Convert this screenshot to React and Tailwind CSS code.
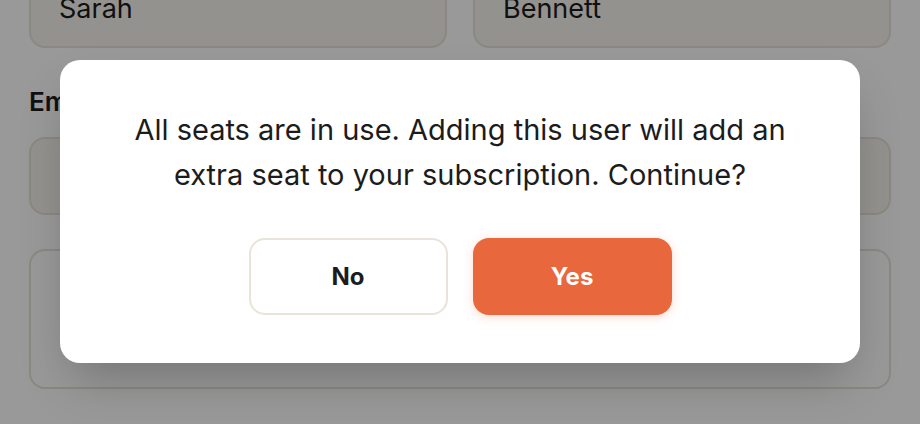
export default function App() {
  return (
    <div className="relative h-[424px] w-[920px] overflow-hidden bg-white font-['Inter',sans-serif] text-[#1c1c1c]">
      {/* Form behind the dialog */}
      <div className="flex flex-col px-[29px]">
        <div className="-mt-[30px] grid grid-cols-2 gap-[26px]">
          <div className="flex h-[78px] items-end rounded-2xl border-2 border-[#e8e3d9] bg-[#f6f3ee] px-[28px] pb-[24px] text-[27px] leading-none">
            Sarah
          </div>
          <div className="flex h-[78px] items-end rounded-2xl border-2 border-[#e8e3d9] bg-[#f6f3ee] px-[28px] pb-[24px] text-[27px] leading-none">
            Bennett
          </div>
        </div>
        <div className="mt-[41px] text-[26px] font-semibold leading-none">Email</div>
        <div className="mt-[22px] h-[78px] rounded-2xl border-2 border-[#e8e3d9] bg-[#f6f3ee]" />
        <div className="mt-[34px] h-[140px] rounded-2xl border-2 border-[#e8e3d9] bg-white" />
      </div>

      {/* Overlay */}
      <div className="absolute inset-0 bg-black/40" />

      {/* Dialog */}
      <div className="absolute left-[60px] top-[60px] flex w-[800px] flex-col items-center rounded-[20px] bg-white px-12 pb-12 pt-[47px] shadow-2xl">
        <p className="text-center text-[29px] leading-[45px] text-[#1c1c1c]">
          All seats are in use. Adding this user will add an
          <br />
          extra seat to your subscription. Continue?
        </p>
        <div className="mt-[41px] flex gap-[25px]">
          <button
            type="button"
            className="h-[77px] w-[199px] rounded-2xl border-2 border-[#e9e4da] bg-white text-[24px] font-bold text-[#1c1c1c]"
          >
            No
          </button>
          <button
            type="button"
            className="h-[77px] w-[199px] rounded-2xl bg-[#e8673c] text-[24px] font-bold text-white shadow-[0_2px_10px_rgba(232,103,60,0.25)]"
          >
            Yes
          </button>
        </div>
      </div>
    </div>
  );
}
